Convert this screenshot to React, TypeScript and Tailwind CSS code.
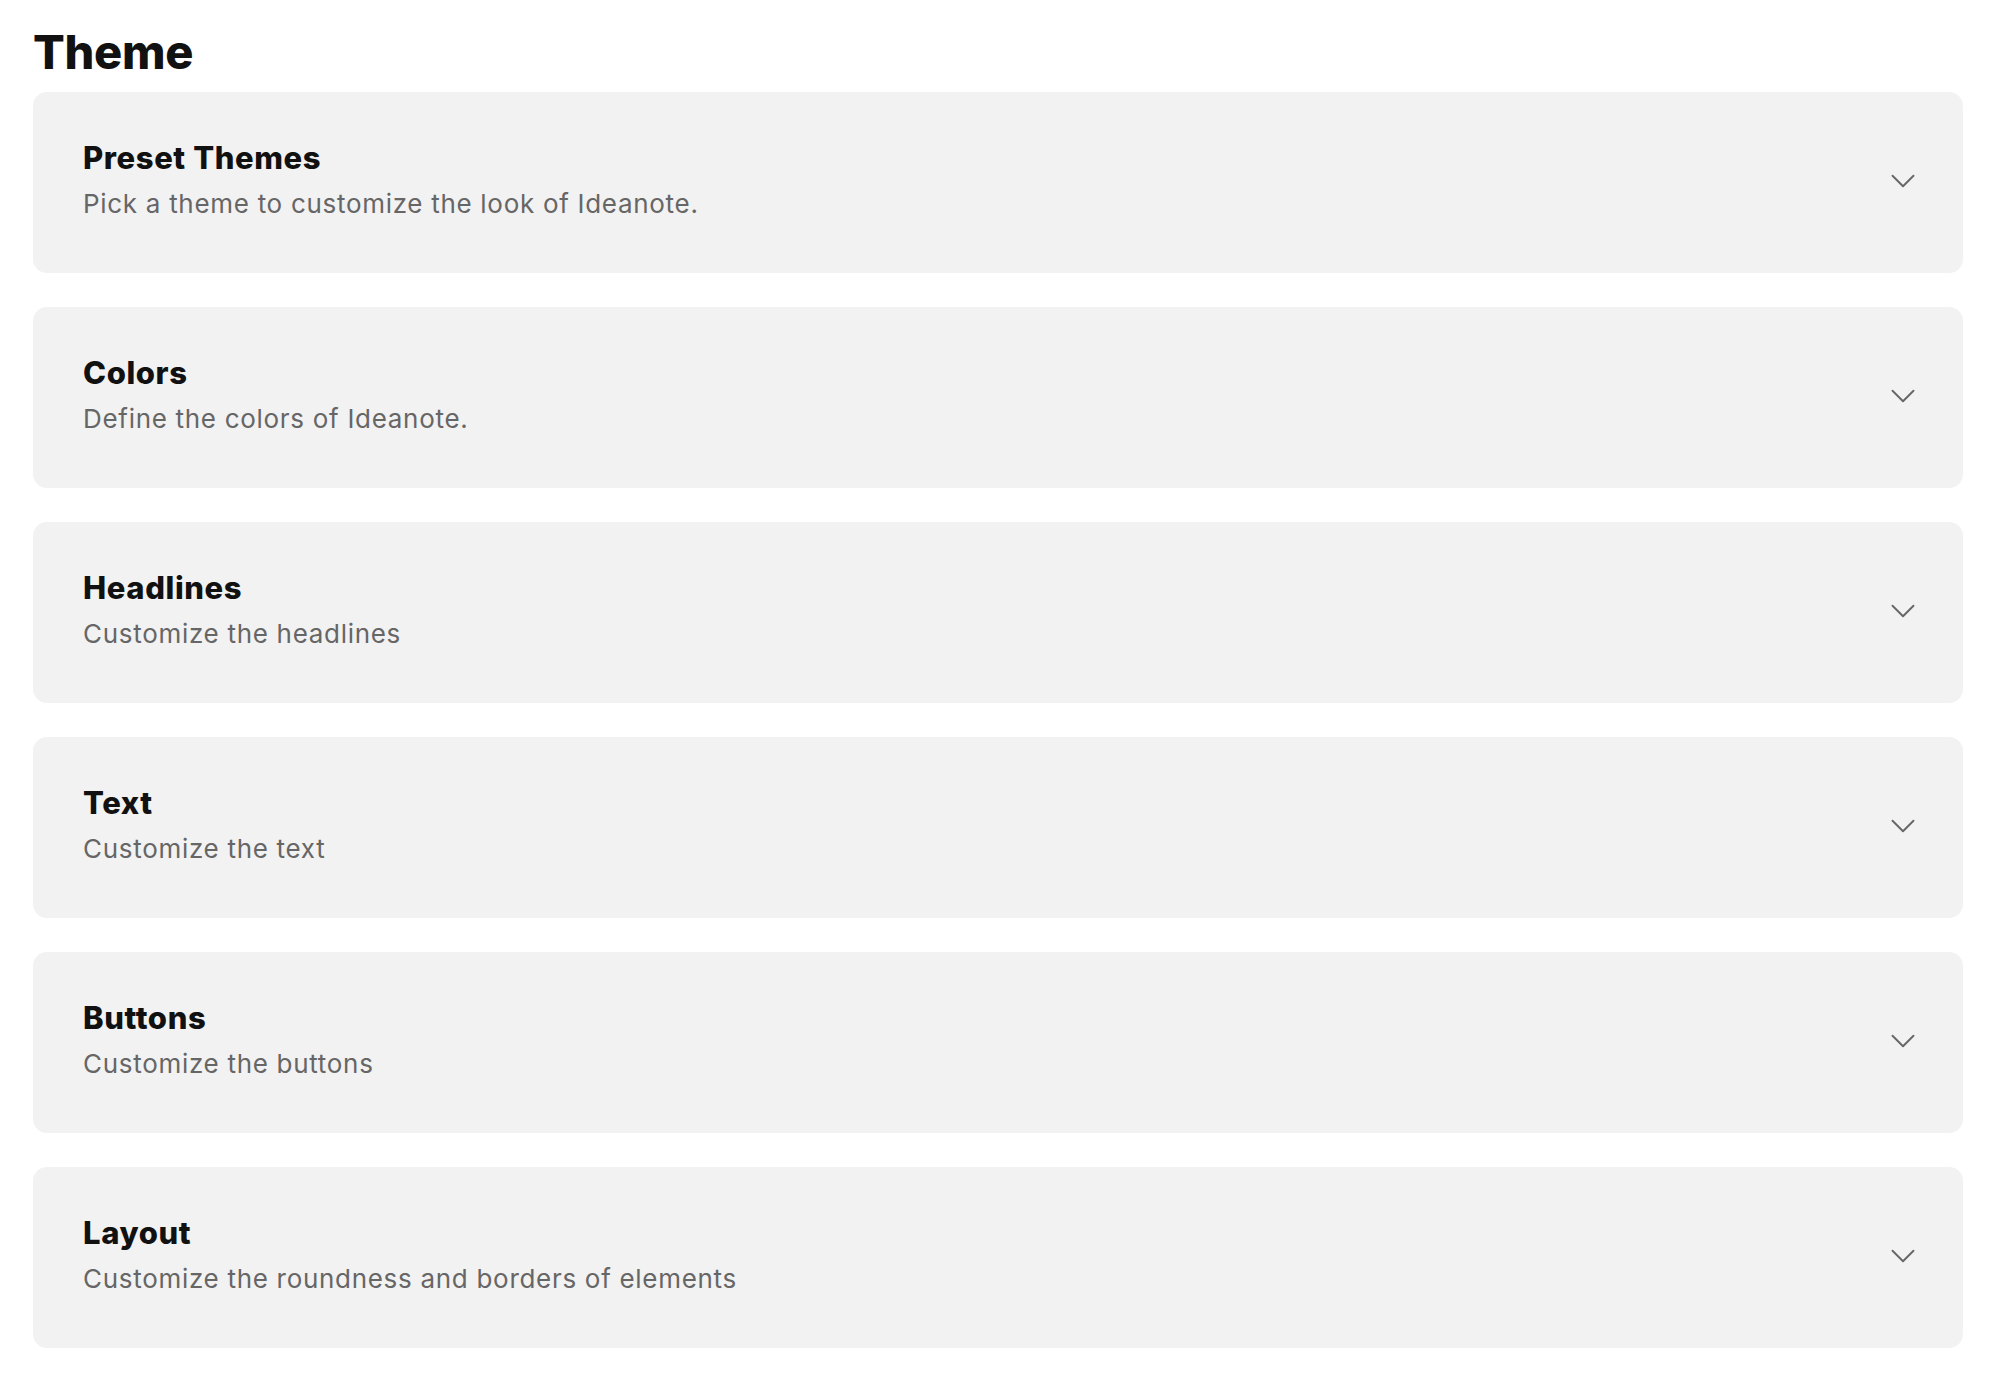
import { ChevronDown } from 'lucide-react';

const sections = [
  { title: 'Preset Themes', description: 'Pick a theme to customize the look of Ideanote.' },
  { title: 'Colors', description: 'Define the colors of Ideanote.' },
  { title: 'Headlines', description: 'Customize the headlines' },
  { title: 'Text', description: 'Customize the text' },
  { title: 'Buttons', description: 'Customize the buttons' },
  { title: 'Layout', description: 'Customize the roundness and borders of elements' },
];

export default function App() {
  return (
    <div className="min-h-screen bg-white px-[33px] pt-[22px] font-['Inter',sans-serif]">
      <h1 className="text-[47px] font-extrabold leading-[60px] tracking-[-0.3px] text-[#111]">Theme</h1>
      <div className="mt-[10px] flex flex-col gap-[34px]">
        {sections.map((section) => (
          <button
            key={section.title}
            type="button"
            className="flex h-[181px] w-full items-center justify-between rounded-[14px] bg-[#f2f2f2] pb-[5px] pl-[50px] pr-[39px] text-left"
          >
            <div className="flex flex-col gap-[12px]">
              <span className="text-[31px] font-extrabold leading-[36px] tracking-[0.6px] text-[#111]">{section.title}</span>
              <span className="text-[26px] leading-[32px] tracking-[0.7px] text-[#666]">{section.description}</span>
            </div>
            <ChevronDown className="mt-[2px] h-[42px] w-[42px] text-[#666]" strokeWidth={1.1} />
          </button>
        ))}
      </div>
    </div>
  );
}
